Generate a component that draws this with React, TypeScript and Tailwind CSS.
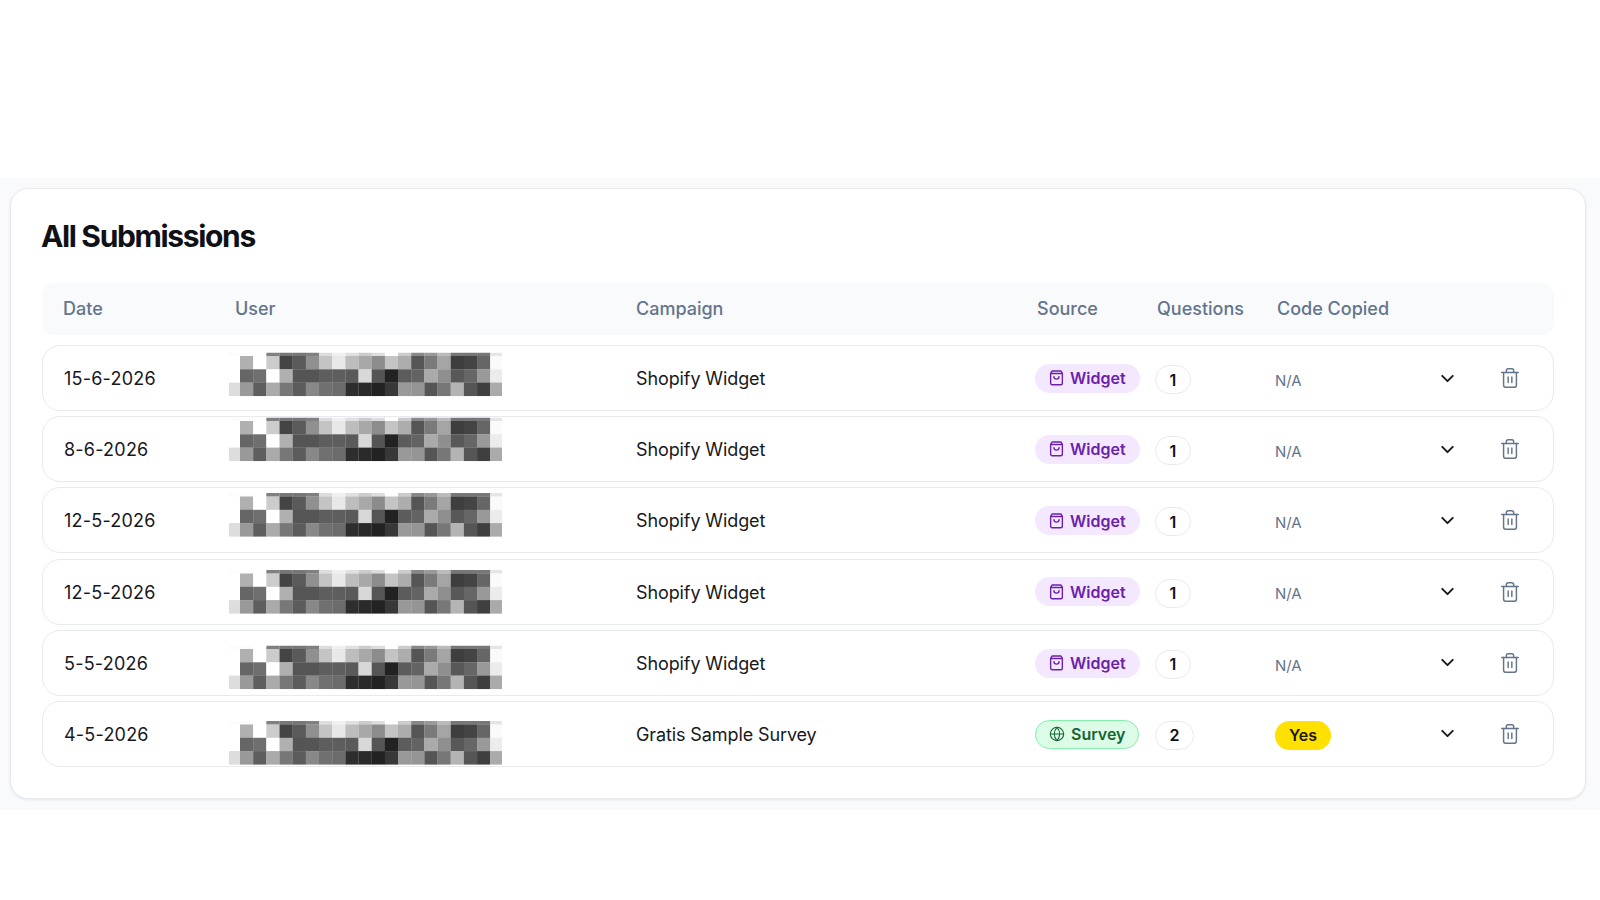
import React from 'react';
import { ChevronDown, Trash2, Globe } from 'lucide-react';

const mosaic = [
  ['#fcfcfc', '#fcfcfc', '#ffffff', '#808080', '#777777', '#777777', '#808080', '#dddddd', '#f0f0f0', '#e0e0e0', '#cccccc', '#dddddd', '#ffffff', '#cccccc', '#888888', '#999999', '#bbbbbb', '#777777', '#777777', '#777777', '#e5e5e5'],
  ['#ffffff', '#b0b0b0', '#ffffff', '#cccccc', '#444444', '#5a5a5a', '#909090', '#c4c4c4', '#e8e8e8', '#bdbdbd', '#a8a8a8', '#8c8c8c', '#c4c4c4', '#adadad', '#555555', '#7a7a7a', '#a5a5a5', '#3e3e3e', '#444444', '#666666', '#fafafa'],
  ['#ffffff', '#666666', '#6f6f6f', '#ffffff', '#b0b0b0', '#555555', '#555555', '#5e5e5e', '#5e5e5e', '#5a5a5a', '#d8d8d8', '#555555', '#222222', '#5c5c5c', '#636363', '#aaaaaa', '#8f8f8f', '#585858', '#666666', '#999999', '#ececec'],
  ['#dddddd', '#999999', '#5e5e5e', '#aaaaaa', '#777777', '#5c5c5c', '#888888', '#707070', '#6c6c6c', '#2e2e2e', '#2a2a2a', '#222222', '#383838', '#999999', '#959595', '#555555', '#777777', '#b4b4b4', '#555555', '#3f3f3f', '#aaaaaa'],
];

const rows = [
  { date: '15-6-2026', campaign: 'Shopify Widget', source: 'Widget', count: 1, copied: 'N/A', shift: '-translate-y-[3.5px]' },
  { date: '8-6-2026', campaign: 'Shopify Widget', source: 'Widget', count: 1, copied: 'N/A', shift: '-translate-y-[9.5px]' },
  { date: '12-5-2026', campaign: 'Shopify Widget', source: 'Widget', count: 1, copied: 'N/A', shift: '-translate-y-[5px]' },
  { date: '12-5-2026', campaign: 'Shopify Widget', source: 'Widget', count: 1, copied: 'N/A', shift: 'translate-y-0' },
  { date: '5-5-2026', campaign: 'Shopify Widget', source: 'Widget', count: 1, copied: 'N/A', shift: 'translate-y-[4.5px]' },
  { date: '4-5-2026', campaign: 'Gratis Sample Survey', source: 'Survey', count: 2, copied: 'Yes', shift: 'translate-y-[9px]' },
];

const Mosaic = ({ shift }: { shift: string }) => (
  <svg width="273" height="44" viewBox="0 0 273 44" className={`absolute left-[14px] top-1/2 -mt-[22px] blur-[0.5px] ${shift}`}>
    {mosaic.map((line, r) =>
      line.map((fill, c) => (
        <rect
          key={`${r}-${c}`}
          x={c === 0 ? 0 : 11 + (c - 1) * 13.17}
          y={r === 0 ? 0 : 3.5 + (r - 1) * 13.3}
          width={c === 0 ? 11.2 : 13.3}
          height={r === 0 ? 3.7 : 13.5}
          fill={fill}
        />
      ))
    )}
  </svg>
);

const BagIcon = () => (
  <svg width="15" height="16" viewBox="0 0 14 15" fill="none" stroke="#6b21a8" strokeWidth="1.3" strokeLinecap="round" strokeLinejoin="round">
    <path d="M2.8 1h8.4l1.3 2.2v9.2a1.4 1.4 0 0 1-1.4 1.4H2.9a1.4 1.4 0 0 1-1.4-1.4V3.2z" />
    <path d="M1.5 3.3h11" />
    <path d="M4.6 6.2a2.4 2.4 0 0 0 4.8 0" />
  </svg>
);

const App: React.FC = () => {
  return (
    <div className="h-[900px] bg-white pt-[178px] font-['Inter',sans-serif]">
      <div className="h-[632px] bg-[#f8fafc] pl-[10px] pr-[14px] pt-[9.5px]">
        <div className="h-[611px] rounded-[18px] border-[1.5px] border-[#e8eaee] bg-white px-[31px] pt-[27px] shadow-[0_1px_3px_rgba(15,23,42,0.08)]">
          <h2 className="-ml-[1px] text-[30px] font-bold leading-[40px] tracking-[-0.045em] text-[#0f1117]">All Submissions</h2>

          <div className="mt-[27px] grid h-[52px] grid-cols-[172px_401px_401px_120px_120px_1fr] items-center rounded-[12px] bg-[#f8fafc] pb-[1px] text-[18px] font-medium text-[#64748b]">
            <div className="pl-[21px]">Date</div>
            <div className="pl-[21px]">User</div>
            <div className="pl-[21px]">Campaign</div>
            <div className="pl-[21px]">Source</div>
            <div className="pl-[21px]">Questions</div>
            <div className="pl-[21px]">Code Copied</div>
          </div>

          <div className="mt-[10.5px] flex flex-col gap-[5.2px]">
            {rows.map((row, i) => (
              <div key={i} className="grid h-[66px] grid-cols-[172px_401px_401px_120px_120px_1fr] items-center rounded-[18px] border-[1.5px] border-[#e8eaee] bg-white text-[18px] text-[#16181d]">
                <div className="pl-[21px] pt-[1px] tracking-[0.012em]">{row.date}</div>
                <div className="relative h-full">
                  <Mosaic shift={row.shift} />
                </div>
                <div className="pl-[20px] pt-[1px] tracking-[-0.006em]">{row.campaign}</div>
                <div className="pl-[18px] pt-[1px]">
                  {row.source === 'Widget' ? (
                    <span className="inline-flex h-[29px] items-center gap-[6px] rounded-full bg-[#f3e8ff] pl-[14px] pr-[14px] text-[16px] font-semibold text-[#6b21a8]">
                      <BagIcon />
                      Widget
                    </span>
                  ) : (
                    <span className="inline-flex h-[29px] items-center gap-[6px] rounded-full border-[1.5px] border-[#86efac] bg-[#dcfce7] pl-[13px] pr-[13px] text-[16px] font-semibold text-[#166534]">
                      <Globe size={16} strokeWidth={1.6} />
                      Survey
                    </span>
                  )}
                </div>
                <div className="pl-[18px]">
                  <span className="mt-[3px] inline-flex h-[29px] items-center rounded-full border-[1.5px] border-[#e8eaee] px-[13.5px] text-[16px] font-semibold text-[#0f1117]">{row.count}</span>
                </div>
                <div className="flex items-center pl-[18px] pr-[32px]">
                  {row.copied === 'Yes' ? (
                    <span className="mt-[3px] inline-flex h-[29px] items-center rounded-full bg-[#ffe000] px-[14px] text-[16px] font-semibold text-[#1a1a0a]">Yes</span>
                  ) : (
                    <span className="mt-[6px] text-[15px] text-[#64748b]">N/A</span>
                  )}
                  <ChevronDown size={21} strokeWidth={2.2} className="ml-auto text-[#16181d]" />
                  <Trash2 size={22} strokeWidth={1.6} className="ml-[41px] text-[#64748b]" />
                </div>
              </div>
            ))}
          </div>
        </div>
      </div>
    </div>
  );
};

export default App;
